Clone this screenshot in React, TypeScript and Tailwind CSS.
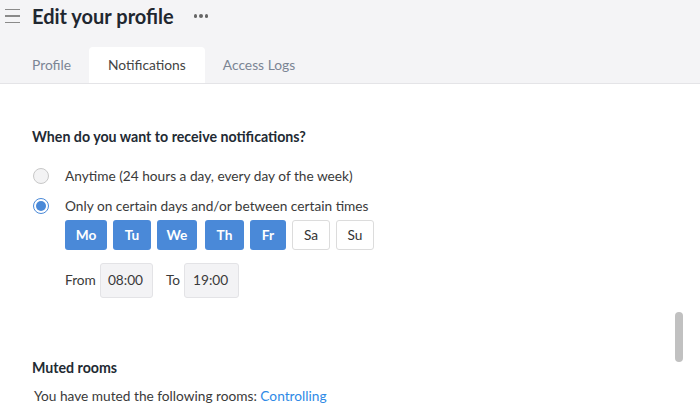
import React from "react";

const days = [
  { d: "Mo", on: true, c: "w-[42px]" },
  { d: "Tu", on: true, c: "w-[38px] ml-[6px]" },
  { d: "We", on: true, c: "w-[40px] ml-[6px]" },
  { d: "Th", on: true, c: "w-[39px] ml-[8px]" },
  { d: "Fr", on: true, c: "w-[36px] ml-[6px]" },
  { d: "Sa", on: false, c: "w-[38px] ml-[6px]" },
  { d: "Su", on: false, c: "w-[38px] ml-[6px]" },
];

export default function App() {
  return (
    <div
      className="relative w-[700px] h-[420px] overflow-hidden bg-white text-[#333]"
      style={{ fontFamily: "Lato, 'Open Sans', sans-serif" }}
    >
      <div className="bg-[#f4f4f6] border-b border-[#e4e4e7]">
        <div className="flex items-center h-[32px]">
          <div className="ml-[5px] flex flex-col gap-[5px] w-[15px]">
            <div className="h-[1.5px] bg-[#8a8a8a]" />
            <div className="h-[1.5px] bg-[#8a8a8a]" />
            <div className="h-[1.5px] bg-[#8a8a8a]" />
          </div>
          <div className="ml-[12px] text-[20px] font-bold text-[#1f2730] leading-none">Edit your profile</div>
          <div className="ml-[20px] flex gap-[2px] items-center">
            <div className="w-[3.5px] h-[3.5px] rounded-full bg-[#666]" />
            <div className="w-[3.5px] h-[3.5px] rounded-full bg-[#666]" />
            <div className="w-[3.5px] h-[3.5px] rounded-full bg-[#666]" />
          </div>
        </div>
        <div className="flex mt-[15px] pl-[14px] text-[13.8px]">
          <div className="px-[18px] h-[36px] flex items-center text-[#7b8594]">Profile</div>
          <div className="px-[19px] h-[36px] flex items-center bg-white rounded-t-[4px] text-[#444] -mb-px">Notifications</div>
          <div className="px-[18px] h-[36px] flex items-center text-[#7b8594]">Access Logs</div>
        </div>
      </div>

      <div className="pl-[32px] pt-[43px] text-[13.7px]">
        <div className="font-bold text-[14.2px] text-[#222a33] leading-[20px]">When do you want to receive notifications?</div>

        <div className="mt-[19px] flex items-center h-[20px]">
          <div className="ml-px w-[16px] h-[16px] rounded-full border border-[#c8c8c8] bg-[#f3f3f4]" />
          <div className="ml-[16px] text-[#3a3a3a]">Anytime (24 hours a day, every day of the week)</div>
        </div>
        <div className="mt-[10px] flex items-center h-[20px]">
          <div className="ml-px w-[16px] h-[16px] rounded-full border border-[#4a89d8] bg-white flex items-center justify-center">
            <div className="w-[10px] h-[10px] rounded-full bg-[#4a89d8]" />
          </div>
          <div className="ml-[16px] text-[#3a3a3a]">Only on certain days and/or between certain times</div>
        </div>

        <div className="ml-[33px] mt-[4px] flex">
          {days.map((x) => (
            <div
              key={x.d}
              className={
                x.on
                  ? `${x.c} h-[30px] rounded-[3px] bg-[#4a89d8] text-white font-bold flex items-center justify-center`
                  : `${x.c} h-[30px] rounded-[3px] bg-white border border-[#dcdcdc] text-[#333] flex items-center justify-center`
              }
            >
              {x.d}
            </div>
          ))}
        </div>

        <div className="ml-[33px] mt-[13px] flex items-center text-[#3a3a3a]">
          <span>From</span>
          <div className="ml-[4px] w-[53px] h-[35px] rounded-[3px] bg-[#f3f3f5] border border-[#e3e3e6] flex items-center pl-[7px]">08:00</div>
          <span className="ml-[13px]">To</span>
          <div className="ml-[4px] w-[55px] h-[35px] rounded-[3px] bg-[#f3f3f5] border border-[#e3e3e6] flex items-center pl-[8px]">19:00</div>
        </div>

        <div className="mt-[60px] font-bold text-[14.2px] text-[#222a33] leading-[20px]">Muted rooms</div>
        <div className="mt-[8px] ml-[2px] leading-[20px] text-[#3a3a3a]">
          You have muted the following rooms: <span className="text-[#2e8ae6]">Controlling</span>
        </div>
      </div>

      <div className="absolute left-[675px] top-[312px] w-[8px] h-[50px] rounded-full bg-[#c1c1c1]" />
    </div>
  );
}
